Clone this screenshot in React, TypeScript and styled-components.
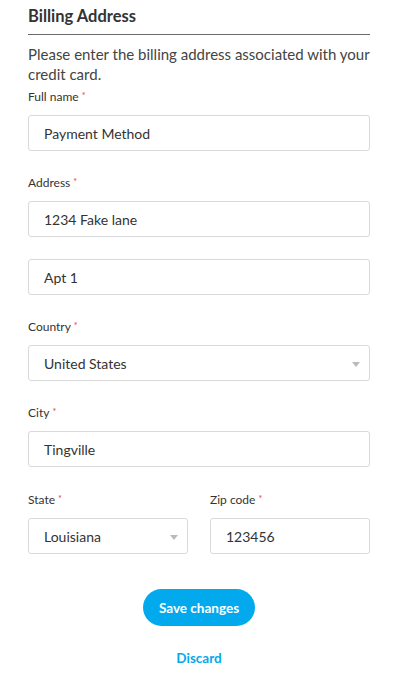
import React from 'react';
import styled, { createGlobalStyle } from 'styled-components';

const GlobalStyle = createGlobalStyle`
  body {
    margin: 0;
    background: #fff;
    font-family: Lato, 'Open Sans', 'Liberation Sans', sans-serif;
    color: #333;
  }
`;

const Page = styled.div`
  padding: 5px 30px 0 28px;
  display: flex;
  flex-direction: column;
`;

const Heading = styled.h2`
  margin: 0;
  padding: 0 0 7px;
  font-size: 16.5px;
  line-height: 22px;
  font-weight: 700;
  color: #333;
  border-bottom: 1px solid #6b6b6b;
`;

const Intro = styled.p`
  margin: 9px 0 0;
  font-size: 15px;
  line-height: 20px;
  color: #444;
`;

const Field = styled.div<{ $gap?: number }>`
  margin-top: ${(p) => p.$gap ?? 25}px;
  display: flex;
  flex-direction: column;
  flex: 1;
  min-width: 0;
`;

const Label = styled.label`
  font-size: 12px;
  line-height: 14px;
  height: 14px;
  color: #333;
  margin-bottom: 11px;
`;

const Req = styled.span`
  position: relative;
  top: -2px;
  color: #e0403a;
  margin-left: 3px;
  font-size: 9px;
  line-height: 0;
`;

const Box = styled.div`
  position: relative;
  height: 36px;
  box-sizing: border-box;
  border: 1px solid #d9d9d9;
  border-radius: 3px;
  background: #fff;
  display: flex;
  align-items: center;
  padding: 0 15px;
  font-size: 14px;
  color: #333;
  & + & {
    margin-top: 22px;
  }
`;

const Caret = styled.span`
  position: absolute;
  right: 9px;
  top: 16px;
  width: 0;
  height: 0;
  border-left: 4px solid transparent;
  border-right: 4px solid transparent;
  border-top: 5px solid #bbb;
`;

const Row = styled.div`
  display: flex;
  gap: 22px;
  margin-top: 1px;
`;

const Actions = styled.div`
  margin-top: 35px;
  display: flex;
  flex-direction: column;
  align-items: center;
`;

const SaveButton = styled.button`
  height: 37px;
  width: 112px;
  border: none;
  border-radius: 19px;
  background: #03a9ed;
  color: #fff;
  font-family: Lato, 'Open Sans', 'Liberation Sans', sans-serif;
  font-weight: 700;
  font-size: 13.5px;
  cursor: pointer;
`;

const DiscardLink = styled.a`
  margin-top: 24px;
  font-size: 13.5px;
  font-weight: 700;
  color: #03a9ed;
  text-decoration: none;
  cursor: pointer;
`;

const Input: React.FC<{ value: string; select?: boolean }> = ({ value, select }) => (
  <Box>
    {value}
    {select && <Caret />}
  </Box>
);

const App: React.FC = () => (
  <>
    <GlobalStyle />
    <Page>
      <Heading>Billing Address</Heading>
      <Intro>Please enter the billing address associated with your credit card.</Intro>
      <Field $gap={6}>
        <Label>Full name<Req>*</Req></Label>
        <Input value="Payment Method" />
      </Field>
      <Field>
        <Label>Address<Req>*</Req></Label>
        <Input value="1234 Fake lane" />
        <Input value="Apt 1" />
      </Field>
      <Field>
        <Label>Country<Req>*</Req></Label>
        <Input value="United States" select />
      </Field>
      <Field>
        <Label>City<Req>*</Req></Label>
        <Input value="Tingville" />
      </Field>
      <Row>
        <Field>
          <Label>State<Req>*</Req></Label>
          <Input value="Louisiana" select />
        </Field>
        <Field>
          <Label>Zip code<Req>*</Req></Label>
          <Input value="123456" />
        </Field>
      </Row>
      <Actions>
        <SaveButton>Save changes</SaveButton>
        <DiscardLink>Discard</DiscardLink>
      </Actions>
    </Page>
  </>
);

export default App;
